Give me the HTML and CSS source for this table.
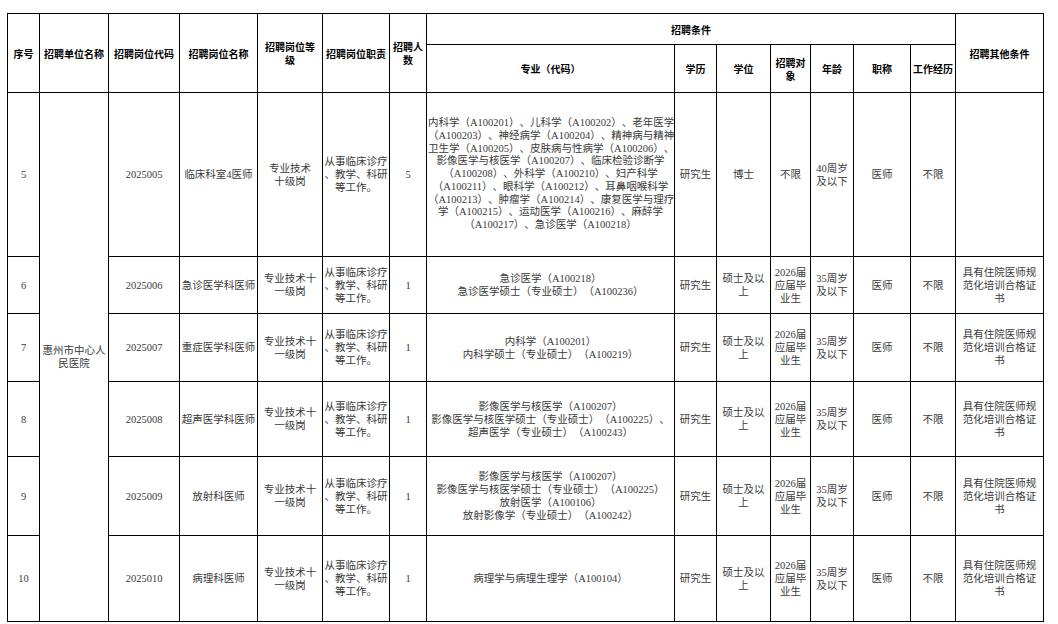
FILE: index.html
```html
<!DOCTYPE html>
<html lang="zh-CN">
<head>
<meta charset="utf-8">
<title>招聘岗位表</title>
<link rel="stylesheet" href="styles.css">
</head>
<body>
<div class="page">
<table class="recruit">
  <colgroup>
    <col class="w-no"><col class="w-unit"><col class="w-code"><col class="w-name"><col class="w-grade"><col class="w-duty"><col class="w-num">
    <col class="w-major"><col class="w-edu"><col class="w-degree"><col class="w-target"><col class="w-age"><col class="w-title"><col class="w-exp"><col class="w-other">
  </colgroup>
  <thead>
    <tr class="h1">
      <th rowspan="2">序号</th>
      <th rowspan="2">招聘单位名称</th>
      <th rowspan="2">招聘岗位代码</th>
      <th rowspan="2">招聘岗位名称</th>
      <th rowspan="2">招聘岗位等<br>级</th>
      <th rowspan="2">招聘岗位职责</th>
      <th rowspan="2">招聘人<br>数</th>
      <th colspan="7">招聘条件</th>
      <th rowspan="2">招聘其他条件</th>
    </tr>
    <tr class="h2">
      <th>专业（代码）</th>
      <th>学历</th>
      <th>学位</th>
      <th>招聘对<br>象</th>
      <th>年龄</th>
      <th>职称</th>
      <th>工作经历</th>
    </tr>
  </thead>
  <tbody>
    <tr class="r5">
      <td>5</td>
      <td rowspan="6" class="unit">惠州市中心人<br>民医院</td>
      <td>2025005</td>
      <td>临床科室4医师</td>
      <td>专业技术<br>十级岗</td>
      <td class="duty">从事临床诊疗<br>、教学、科研<br>等工作。</td>
      <td>5</td>
      <td class="major dense">内科学（A100201）、儿科学（A100202）、老年医学<br>（A100203）、神经病学（A100204）、精神病与精神<br>卫生学（A100205）、皮肤病与性病学（A100206）、<br>影像医学与核医学（A100207）、临床检验诊断学<br>（A100208）、外科学（A100210）、妇产科学<br>（A100211）、眼科学（A100212）、耳鼻咽喉科学<br>（A100213）、肿瘤学（A100214）、康复医学与理疗<br>学（A100215）、运动医学（A100216）、麻醉学<br>（A100217）、急诊医学（A100218）</td>
      <td>研究生</td>
      <td>博士</td>
      <td>不限</td>
      <td>40周岁<br>及以下</td>
      <td>医师</td>
      <td>不限</td>
      <td></td>
    </tr>
    <tr class="r6">
      <td>6</td>
      <td>2025006</td>
      <td>急诊医学科医师</td>
      <td>专业技术十<br>一级岗</td>
      <td class="duty">从事临床诊疗<br>、教学、科研<br>等工作。</td>
      <td>1</td>
      <td class="major">急诊医学（A100218）<br>急诊医学硕士（专业硕士）（A100236）</td>
      <td>研究生</td>
      <td>硕士及以<br>上</td>
      <td>2026届<br>应届毕<br>业生</td>
      <td>35周岁<br>及以下</td>
      <td>医师</td>
      <td>不限</td>
      <td>具有住院医师规<br>范化培训合格证<br>书</td>
    </tr>
    <tr class="r7">
      <td>7</td>
      <td>2025007</td>
      <td>重症医学科医师</td>
      <td>专业技术十<br>一级岗</td>
      <td class="duty">从事临床诊疗<br>、教学、科研<br>等工作。</td>
      <td>1</td>
      <td class="major">内科学（A100201）<br>内科学硕士（专业硕士）（A100219）</td>
      <td>研究生</td>
      <td>硕士及以<br>上</td>
      <td>2026届<br>应届毕<br>业生</td>
      <td>35周岁<br>及以下</td>
      <td>医师</td>
      <td>不限</td>
      <td>具有住院医师规<br>范化培训合格证<br>书</td>
    </tr>
    <tr class="r8">
      <td>8</td>
      <td>2025008</td>
      <td>超声医学科医师</td>
      <td>专业技术十<br>一级岗</td>
      <td class="duty">从事临床诊疗<br>、教学、科研<br>等工作。</td>
      <td>1</td>
      <td class="major">影像医学与核医学（A100207）<br>影像医学与核医学硕士（专业硕士）（A100225）、<br>超声医学（专业硕士）（A100243）</td>
      <td>研究生</td>
      <td>硕士及以<br>上</td>
      <td>2026届<br>应届毕<br>业生</td>
      <td>35周岁<br>及以下</td>
      <td>医师</td>
      <td>不限</td>
      <td>具有住院医师规<br>范化培训合格证<br>书</td>
    </tr>
    <tr class="r9">
      <td>9</td>
      <td>2025009</td>
      <td>放射科医师</td>
      <td>专业技术十<br>一级岗</td>
      <td class="duty">从事临床诊疗<br>、教学、科研<br>等工作。</td>
      <td>1</td>
      <td class="major">影像医学与核医学（A100207）<br>影像医学与核医学硕士（专业硕士）（A100225）<br>放射医学（A100106）<br>放射影像学（专业硕士）（A100242）</td>
      <td>研究生</td>
      <td>硕士及以<br>上</td>
      <td>2026届<br>应届毕<br>业生</td>
      <td>35周岁<br>及以下</td>
      <td>医师</td>
      <td>不限</td>
      <td>具有住院医师规<br>范化培训合格证<br>书</td>
    </tr>
    <tr class="r10">
      <td>10</td>
      <td>2025010</td>
      <td>病理科医师</td>
      <td>专业技术十<br>一级岗</td>
      <td class="duty">从事临床诊疗<br>、教学、科研<br>等工作。</td>
      <td>1</td>
      <td class="major">病理学与病理生理学（A100104）</td>
      <td>研究生</td>
      <td>硕士及以<br>上</td>
      <td>2026届<br>应届毕<br>业生</td>
      <td>35周岁<br>及以下</td>
      <td>医师</td>
      <td>不限</td>
      <td>具有住院医师规<br>范化培训合格证<br>书</td>
    </tr>
  </tbody>
</table>
</div>
</body>
</html>
```
FILE: styles.css
```css
html, body {
  margin: 0;
  padding: 0;
  background: #fff;
}
.page {
  padding: 13px 0 0 7px;
}
.recruit {
  border-collapse: collapse;
  table-layout: fixed;
  width: 1036px;
  font-family: "Liberation Serif", "Noto Sans CJK SC", serif;
  font-size: 10.5px;
  line-height: 13px;
  color: #3a3a3a;
  text-spacing-trim: space-all;
}
.recruit th,
.recruit td {
  border: 1px solid #000;
  padding: 0 1px;
  text-align: center;
  vertical-align: middle;
  white-space: nowrap;
  overflow: visible;
}
.recruit th {
  font-family: "Noto Sans CJK SC", sans-serif;
  font-weight: bold;
  font-size: 10px;
  color: #000;
}
.w-no { width: 32px; }
.w-unit { width: 69px; }
.w-code { width: 71px; }
.w-name { width: 78px; }
.w-grade { width: 65px; }
.w-duty { width: 67px; }
.w-num { width: 37px; }
.w-major { width: 248px; }
.w-edu { width: 42px; }
.w-degree { width: 54px; }
.w-target { width: 40px; }
.w-age { width: 43px; }
.w-title { width: 57px; }
.w-exp { width: 45px; }
.w-other { width: 88px; }

.h1 { height: 31px; }
.h2 { height: 48px; }
.r5 { height: 164px; }
.r6 { height: 57px; }
.r7 { height: 68px; }
.r8 { height: 75px; }
.r9 { height: 79px; }
.r10 { height: 86px; }

.major.dense {
  line-height: 12.8px;
}
```
